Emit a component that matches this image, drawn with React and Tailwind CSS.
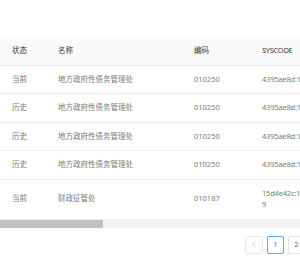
const rows = [
  { state: '当前', name: '地方政府性债务管理处', code: '010250', sys: ['4395ae8d:16a8b2c3f0e:-7ffa'] },
  { state: '历史', name: '地方政府性债务管理处', code: '010250', sys: ['4395ae8d:16a8b2c3f0e:-7ff8'] },
  { state: '历史', name: '地方政府性债务管理处', code: '010250', sys: ['4395ae8d:16a8b2c3f0e:-7ff6'] },
  { state: '历史', name: '地方政府性债务管理处', code: '010250', sys: ['4395ae8d:16a8b2c3f0e:-7ff4'] },
  { state: '当前', name: '财政征管处', code: '010187', sys: ['15d4e42c:16c1e7a9b2d:-7ff', '9'] },
];

export default function App() {
  const font = { fontFamily: '"Noto Sans", "Noto Sans CJK SC", sans-serif' };

  return (
    <div className="w-[300px] h-[266px] bg-white overflow-hidden" style={font}>
      <div className="h-[37px]" />
      <div className="overflow-hidden">
        <table className="table-fixed w-[520px] border-collapse text-[7.5px] leading-[11.5px]">
          <colgroup>
            <col className="w-[46px]" />
            <col className="w-[136px]" />
            <col className="w-[68px]" />
            <col className="w-[270px]" />
          </colgroup>
          <thead>
            <tr className="bg-[#fafafa] text-[#3a3a3a]">
              <th className="text-left font-normal pl-[12px] py-[8px] border-b border-[#eeeeee]">状态</th>
              <th className="text-left font-normal pl-[12px] py-[8px] border-b border-[#eeeeee]">名称</th>
              <th className="text-left font-normal pl-[12px] py-[8px] border-b border-[#eeeeee]">编码</th>
              <th className="text-left font-normal pl-[12px] py-[8px] border-b border-[#eeeeee] tracking-[-0.3px]">SYSCODE</th>
            </tr>
          </thead>
          <tbody className="text-[#7a7a7a]">
            {rows.map((r, i) => (
              <tr key={i}>
                <td className="pl-[12px] py-[8px] border-b border-[#f0f0f0] align-middle">{r.state}</td>
                <td className="pl-[12px] py-[8px] border-b border-[#f0f0f0] align-middle">{r.name}</td>
                <td className="pl-[12px] py-[8px] border-b border-[#f0f0f0] align-middle">{r.code}</td>
                <td className="pl-[12px] py-[8px] border-b border-[#f0f0f0] align-middle whitespace-nowrap tracking-[-0.2px]">
                  {r.sys.map((s, j) => (
                    <div key={j}>{s}</div>
                  ))}
                </td>
              </tr>
            ))}
          </tbody>
        </table>
      </div>
      <div className="h-[8px] bg-[#f1f1f1] flex">
        <div className="w-[103px] h-full bg-[#c1c1c1]" />
      </div>
      <div className="flex gap-[4px] ml-[245px] mt-[8px] text-[7.5px]">
        <div className="w-[18px] h-[18px] shrink-0 border border-[#e8e8e8] rounded-[2px] flex items-center justify-center text-[#c8c8c8]">
          <svg width="6" height="7" viewBox="0 0 6 7" fill="none">
            <path d="M4 0.8 L1.5 3.5 L4 6.2" stroke="currentColor" strokeWidth="0.8" />
          </svg>
        </div>
        <div className="w-[17px] h-[18px] shrink-0 border border-[#5aa7f5] rounded-[2px] flex items-center justify-center text-[#1890ff]">
          1
        </div>
        <div className="w-[17px] h-[18px] shrink-0 border border-[#e0e0e0] rounded-[2px] flex items-center justify-center text-[#666]">
          2
        </div>
      </div>
    </div>
  );
}
